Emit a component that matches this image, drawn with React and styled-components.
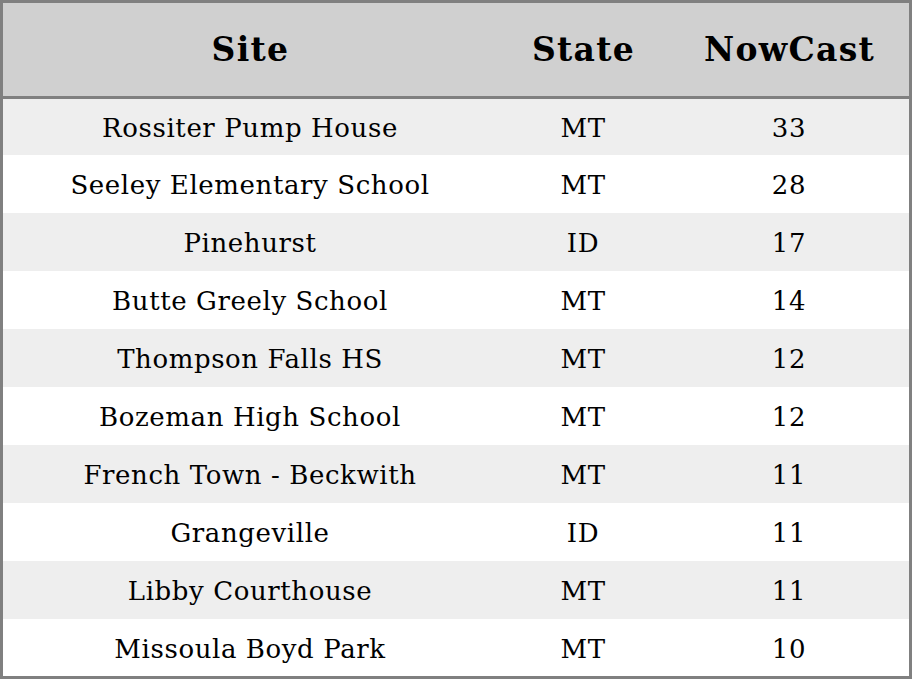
import React from "react";
import styled, { createGlobalStyle } from "styled-components";

const GlobalStyle = createGlobalStyle`
  html, body {
    margin: 0;
    padding: 0;
    background: #ffffff;
  }
  body {
    font-family: "DejaVu Serif", "Liberation Serif", serif;
    color: #000000;
  }
`

const Table = styled.div`
  box-sizing: border-box;
  width: 912px;
  height: 679px;
  border: 3px solid #808080;
  display: grid;
  grid-template-columns: 494px 172px 240px;
  grid-template-rows: 96px 56px repeat(8, 58px) 1fr;
  overflow: hidden;
`

const HeadCell = styled.div`
  background: #d0d0d0;
  border-bottom: 3px solid #808080;
  display: flex;
  align-items: center;
  justify-content: center;
  font-size: 33px;
  font-weight: bold;
  letter-spacing: 1.3px;
  padding-left: 1px;
`

const Cell = styled.div`
  background: ${props => props.$shaded ? "#eeeeee" : "#ffffff"};
  display: flex;
  align-items: center;
  justify-content: center;
  font-size: 26px;
  letter-spacing: 0.6px;
  padding-top: 2px;
`

const rows = [
  ["Rossiter Pump House", "MT", 33],
  ["Seeley Elementary School", "MT", 28],
  ["Pinehurst", "ID", 17],
  ["Butte Greely School", "MT", 14],
  ["Thompson Falls HS", "MT", 12],
  ["Bozeman High School", "MT", 12],
  ["French Town - Beckwith", "MT", 11],
  ["Grangeville", "ID", 11],
  ["Libby Courthouse", "MT", 11],
  ["Missoula Boyd Park", "MT", 10],
]

export default function App() {
  return (
    <>
      <GlobalStyle />
      <Table>
        <HeadCell>Site</HeadCell>
        <HeadCell>State</HeadCell>
        <HeadCell>NowCast</HeadCell>
        {rows.map((row, i) => (
          <React.Fragment key={row[0]}>
            <Cell $shaded={i % 2 === 0}>{row[0]}</Cell>
            <Cell $shaded={i % 2 === 0}>{row[1]}</Cell>
            <Cell $shaded={i % 2 === 0}>{row[2]}</Cell>
          </React.Fragment>
        ))}
      </Table>
    </>
  );
}
